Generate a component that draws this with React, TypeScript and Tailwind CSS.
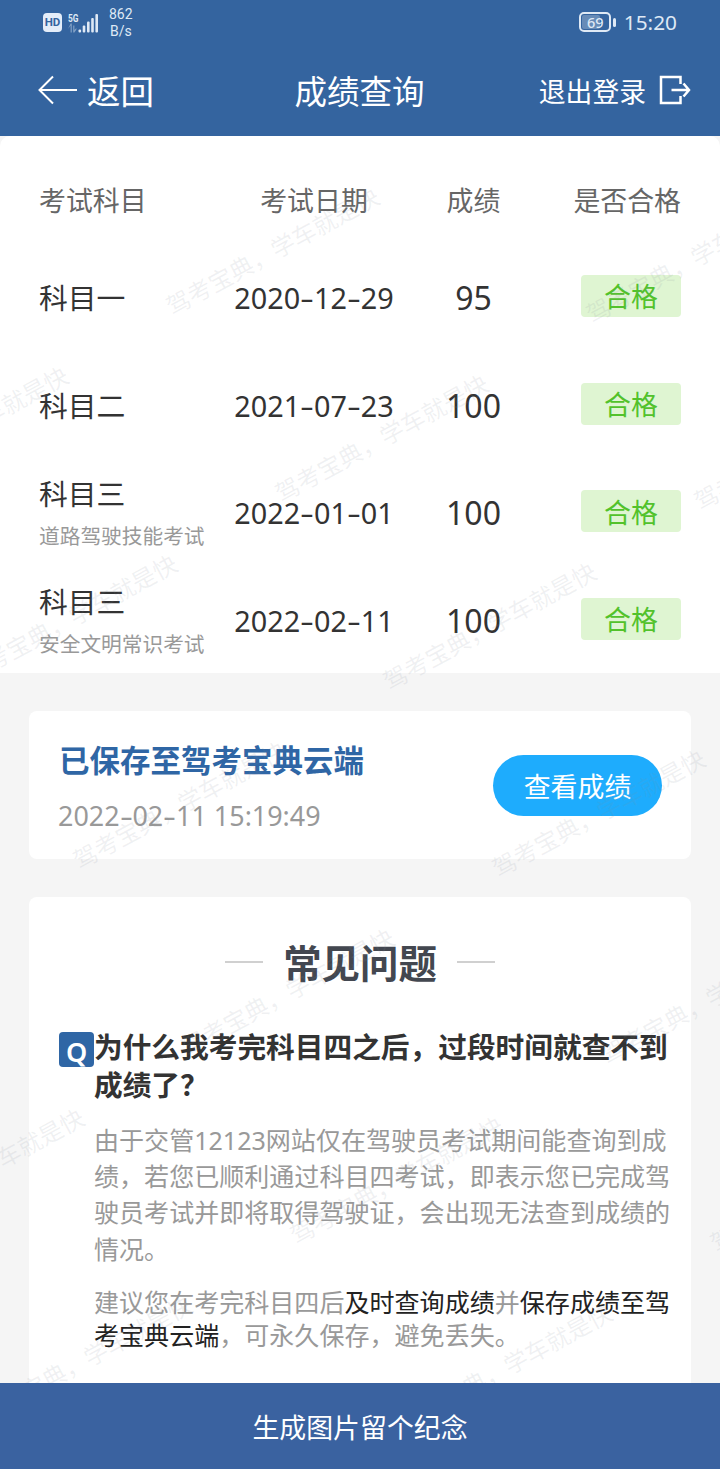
import type { ReactNode } from 'react'

interface Exam {
  subject: string
  note?: string
  date: string
  score: number
}

const exams: Exam[] = [
  { subject: '科目一', date: '2020-12-29', score: 95 },
  { subject: '科目二', date: '2021-07-23', score: 100 },
  { subject: '科目三', note: '道路驾驶技能考试', date: '2022-01-01', score: 100 },
  { subject: '科目三', note: '安全文明常识考试', date: '2022-02-11', score: 100 },
]

// centre points of the repeated watermark, on a slanted grid
const marks: { x: number; y: number }[] = []
for (let row = -2; row < 8; row++) {
  for (let col = -3; col < 4; col++) {
    const x = 273 + row * 108.7 + col * 419.5
    const y = 252 + row * 187.3 + col * 8
    if (x > -110 && x < 830 && y > 75 && y < 1440) marks.push({ x, y: y - 136 })
  }
}

function Watermark() {
  return (
    <div className="pointer-events-none absolute inset-0 overflow-hidden">
      {marks.map((m) => (
        <span
          key={`${m.x},${m.y}`}
          className="absolute -translate-x-1/2 -translate-y-1/2 -rotate-[28.5deg] text-[23.800px] leading-none whitespace-nowrap text-[#808c98]/12"
          style={{ left: m.x, top: m.y }}
        >
          驾考宝典，学车就是快
        </span>
      ))}
    </div>
  )
}

// digits with a wide dash between the date parts
function DateText({ value }: { value: string }) {
  return (
    <>
      {value.split('-').map((part, i) => (
        <span key={i}>
          {i > 0 && <span className="inline-block w-[0.48em] scale-x-150 text-center">-</span>}
          {part}
        </span>
      ))}
    </>
  )
}

function StatusBar() {
  return (
    <div className="flex h-[45px] items-center justify-between pr-[43px] pl-[43px] text-[#dfe9f5]">
      <div className="flex items-center">
        <span className="flex h-[19px] w-[19px] items-center justify-center rounded-[4px] bg-[#e4edf9] font-[Roboto] text-[11.5px] leading-none font-bold text-[#34649f]">
          HD
        </span>
        <svg className="ml-[6px]" width="32" height="22" viewBox="0 0 32 22" fill="currentColor">
          <text x="0" y="9.5" fontSize="11" fontWeight="700" fontFamily="Roboto" textLength="10.5" lengthAdjust="spacingAndGlyphs">
            5G
          </text>
          <path d="M0 17l2.600-3.500v7h1.200v-9H2.600zM5.200 20.500v-7h1.200v4.500l2-2v1.500l-2 3z" opacity=".45" />
          <rect x="10.500" y="17.500" width="2.600" height="3" rx="1" />
          <rect x="14.700" y="13.500" width="2.600" height="7" rx="1" />
          <rect x="19" y="9.500" width="2.600" height="11" rx="1" />
          <rect x="23.200" y="6" width="2.600" height="14.500" rx="1" />
          <rect x="27.400" y="2" width="2.600" height="18.500" rx="1" />
        </svg>
        <div className="ml-[9px] text-center font-[Roboto] text-[14px] leading-[16.500px]">
          <div>862</div>
          <div>B/s</div>
        </div>
      </div>
      <div className="flex items-center">
        <div className="relative flex h-[20px] w-[32px] items-center justify-center rounded-[5px] border-2 border-current">
          <div className="absolute inset-y-[1px] left-[1px] w-[18px] rounded-[2px] bg-white/25" />
          <span className="relative font-['Noto_Sans'] text-[14.500px] leading-none font-medium">69</span>
        </div>
        <div className="ml-[2px] h-[9px] w-[2.500px] rounded-full bg-current" />
        <span className="ml-[8px] font-['Noto_Sans'] text-[20.800px] leading-none">15:20</span>
      </div>
    </div>
  )
}

function Header() {
  return (
    <header className="h-[136px] bg-[#34649f] text-white">
      <StatusBar />
      <div className="grid h-[90px] grid-cols-3 items-center pr-[29px] pl-[38px]">
        <div className="flex items-center text-[33.500px] leading-none">
          <svg width="40" height="30" viewBox="0 0 40 30" fill="none" stroke="currentColor" strokeWidth="2" className="mr-[9px] -mt-[1px]">
            <path d="M39 15H1.500M15 1.500L1.500 15L15 28.500" />
          </svg>
          <span className="pt-[4px]">返回</span>
        </div>
        <h1 className="-ml-[10px] pt-[5px] text-center text-[32.500px] leading-none whitespace-nowrap">成绩查询</h1>
        <div className="flex items-center justify-end text-[26.800px] leading-none whitespace-nowrap">
          <span className="pt-[5px]">退出登录</span>
          <svg width="32" height="30" viewBox="0 0 32 30" fill="none" stroke="currentColor" strokeWidth="2.500" className="ml-[13px]">
            <path d="M21.500 9V2H2v26h19.500v-7M12.500 15H30M24.500 8.500L30 15l-5.500 6.500" />
          </svg>
        </div>
      </div>
    </header>
  )
}

function ExamTable() {
  return (
    <section className="rounded-t-[10px] bg-white px-[39px]">
      <div className="grid h-[106px] grid-cols-[195px_160px_160px_1fr] items-center pt-[24px] text-[26.900px] leading-none text-[#666]">
        <div>考试科目</div>
        <div className="text-center">考试日期</div>
        <div className="-ml-[1px] text-center">成绩</div>
        <div className="text-right">是否合格</div>
      </div>
      {exams.map((exam) => (
        <div key={exam.date} className="grid h-[107.700px] grid-cols-[195px_160px_160px_1fr] items-center leading-none text-[#333]">
          <div className={exam.note ? 'pt-[8px]' : 'pt-[4px]'}>
            <div className="text-[28.800px] leading-[42px]">{exam.subject}</div>
            {exam.note && <div className="text-[20.700px] leading-[42px] whitespace-nowrap text-[#999]">{exam.note}</div>}
          </div>
          <div className="pt-[5px] text-center text-[28.800px] whitespace-nowrap">
            <DateText value={exam.date} />
          </div>
          <div className="-ml-[1px] pt-[4px] text-center text-[32px]">{exam.score}</div>
          <div className="flex h-[42px] w-[100px] items-center justify-center justify-self-end rounded-[4px] bg-[#dff5d2] pt-[4px] text-[26.900px] text-[#52c22b]">
            合格
          </div>
        </div>
      ))}
    </section>
  )
}

function SavedCard() {
  return (
    <section className="flex h-[148px] items-center justify-between rounded-[8px] bg-white pr-[29px] pl-[30px]">
      <div className="pt-[6px]">
        <div className="text-[30.500px] leading-[56px] font-bold text-[#2f66a5]">已保存至驾考宝典云端</div>
        <div className="-ml-[1px] text-[26.900px] leading-[56px] text-[#999]">
          <DateText value="2022-02-11 15:19:49" />
        </div>
      </div>
      <button className="mt-[1px] h-[61px] w-[169px] rounded-full bg-[#1eacfd] pt-[4px] text-[26.900px] leading-none text-white">
        查看成绩
      </button>
    </section>
  )
}

function Strong({ children }: { children: ReactNode }) {
  return <span className="text-[#222]">{children}</span>
}

function Faq() {
  return (
    <section className="flex-1 rounded-t-[8px] bg-white pt-[39px] pl-[30px]">
      <div className="-ml-[30px] flex items-center justify-center gap-[20px]">
        <span className="-mt-[2px] h-[2px] w-[38px] bg-[#d0d0d0]" />
        <h2 className="text-[38.400px] leading-[54px] font-bold text-[#434750]">常见问题</h2>
        <span className="-mt-[2px] h-[2px] w-[38px] bg-[#d0d0d0]" />
      </div>
      <div className="mt-[38px] flex">
        <span className="mt-[4px] flex h-[35px] w-[35px] shrink-0 items-center justify-center rounded-[4px] bg-[#2f66a5] pt-[4px] font-['Noto_Sans'] text-[27px] leading-none font-semibold text-white">
          Q
        </span>
        <div className="whitespace-nowrap">
          <h3 className="text-[28.700px] leading-[38px] font-bold text-[#333]">
            为什么我考完科目四之后，过段时间就查不到
            <br />
            成绩了？
          </h3>
          <p className="mt-[18px] text-[25.050px] leading-[36.300px] text-[#999]">
            由于交管12123网站仅在驾驶员考试期间能查询到成
            <br />
            绩，若您已顺利通过科目四考试，即表示您已完成驾
            <br />
            驶员考试并即将取得驾驶证，会出现无法查到成绩的
            <br />
            情况。
          </p>
          <p className="mt-[19px] text-[25.050px] leading-[33.500px] text-[#999]">
            建议您在考完科目四后<Strong>及时查询成绩</Strong>并<Strong>保存成绩至驾</Strong>
            <br />
            <Strong>考宝典云端</Strong>，可永久保存，避免丢失。
          </p>
        </div>
      </div>
    </section>
  )
}

export default function App() {
  return (
    <div className="flex h-[1469px] w-[720px] flex-col overflow-hidden bg-[#f5f5f5] font-['Noto_Sans','Noto_Sans_CJK_SC',sans-serif]">
      <Header />
      <main className="relative flex h-[1247px] flex-col overflow-hidden">
        <ExamTable />
        <div className="mt-[38px] flex flex-1 flex-col gap-[38px] px-[29px]">
          <SavedCard />
          <Faq />
        </div>
        <Watermark />
      </main>
      <button className="h-[86px] bg-[#3a62a0] pt-[4px] text-[26.900px] leading-none text-white">生成图片留个纪念</button>
    </div>
  )
}
